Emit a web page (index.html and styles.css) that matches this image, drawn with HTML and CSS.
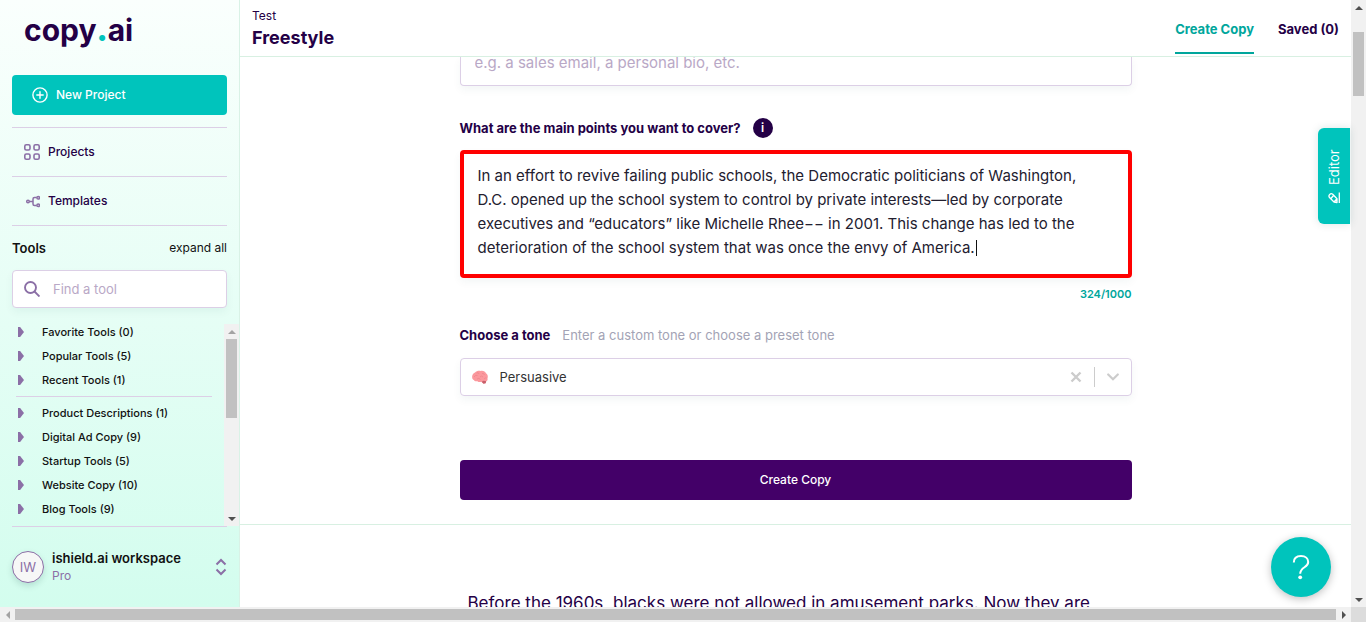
FILE: index.html
```html
<!DOCTYPE html>
<html lang="en">
<head>
<meta charset="utf-8">
<meta name="viewport" content="width=device-width, initial-scale=1">
<title>Freestyle - copy.ai</title>
<link rel="stylesheet" href="styles.css">
</head>
<body>
<div class="window">
  <aside class="sidebar">
    <a class="logo" href="#">copy<span class="logo-dot">.</span>ai</a>
    <button class="new-project" type="button">
      <svg width="16" height="16" viewBox="0 0 16 16" fill="none" stroke="currentColor" stroke-width="1.4" stroke-linecap="round"><circle cx="8" cy="8" r="7.1"/><path d="M8 4.8v6.4M4.8 8h6.4"/></svg>
      New Project
    </button>
    <nav class="nav">
      <a class="nav-link" href="#">
        <svg width="16" height="16" viewBox="0 0 16 16" fill="none" stroke="currentColor" stroke-width="1.6"><rect x=".8" y=".8" width="5.2" height="5.2" rx="1.5"/><rect x="10" y=".8" width="5.2" height="5.2" rx="1.5"/><rect x=".8" y="10" width="5.2" height="5.2" rx="1.5"/><rect x="10" y="10" width="5.2" height="5.2" rx="1.5"/></svg>
        Projects
      </a>
      <a class="nav-link" href="#">
        <svg width="16" height="16" viewBox="0 0 16 16" fill="none" stroke="currentColor" stroke-width="1.5"><circle cx="4" cy="8.500" r="1.300"/><circle cx="14.200" cy="4.800" r="1.300"/><circle cx="14.200" cy="12.200" r="1.300"/><path d="M5.500 8.500H9M12.700 4.500H10.500Q9 4.500 9 6V11Q9 12.500 10.500 12.500H12.700"/></svg>
        Templates
      </a>
    </nav>
    <div class="tools-head">
      <h2 class="tools-title">Tools</h2>
      <button class="expand" type="button">expand all</button>
    </div>
    <label class="search">
      <svg width="16" height="16" viewBox="0 0 16 16" fill="none" stroke="currentColor" stroke-width="1.9"><circle cx="6.500" cy="6.500" r="5.500"/><path d="M10.500 10.500L15.500 15.500"/></svg>
      <input class="search-input" type="text" placeholder="Find a tool" aria-label="Find a tool">
    </label>
    <div class="tools">
      <div class="tools-body">
        <ul class="tool-list">
          <li><button class="tool" type="button">Favorite Tools (0)</button></li>
          <li><button class="tool" type="button">Popular Tools (5)</button></li>
          <li><button class="tool" type="button">Recent Tools (1)</button></li>
        </ul>
        <ul class="tool-list tool-list-more">
          <li><button class="tool" type="button">Product Descriptions (1)</button></li>
          <li><button class="tool" type="button">Digital Ad Copy (9)</button></li>
          <li><button class="tool" type="button">Startup Tools (5)</button></li>
          <li><button class="tool" type="button">Website Copy (10)</button></li>
          <li><button class="tool" type="button">Blog Tools (9)</button></li>
        </ul>
      </div>
      <div class="bar bar-v bar-tools" aria-hidden="true"><i class="arrow up off"></i><div class="track"><div class="thumb thumb-tools"></div></div><i class="arrow down"></i></div>
    </div>
    <button class="workspace" type="button">
      <span class="avatar">IW</span>
      <span class="workspace-text"><b class="workspace-name">ishield.ai workspace</b><span class="plan">Pro</span></span>
      <svg width="12" height="18" viewBox="0 0 12 18" fill="none" stroke="currentColor" stroke-width="2"><path d="M1.500 6.500L6 2L10.500 6.500M1.500 11.500L6 16L10.500 11.500"/></svg>
    </button>
  </aside>

  <main class="main">
    <header class="header">
      <div>
        <div class="crumb">Test</div>
        <h1 class="title">Freestyle</h1>
      </div>
      <nav class="tabs">
        <a class="tab tab-active" href="#">Create Copy</a>
        <a class="tab" href="#">Saved (0)</a>
      </nav>
    </header>
    <div class="scroll">
      <form class="form">
        <input class="field-cut" type="text" placeholder="e.g. a sales email, a personal bio, etc." aria-label="What are you creating?">
        <div class="label-row">
          <label class="label" for="points">What are the main points you want to cover?</label>
          <button class="info" type="button" aria-label="More information">i</button>
        </div>
        <div class="points-wrap">
          <textarea class="points" id="points" rows="4">In an effort to revive failing public schools, the Democratic politicians of Washington, D.C. opened up the school system to control by private interests—led by corporate executives and “educators” like Michelle Rhee−− in 2001. This change has led to the deterioration of the school system that was once the envy of America.</textarea>
          <i class="caret"></i>
        </div>
        <div class="count">324/1000</div>
        <div class="label-row tone-row">
          <label class="label" for="tone">Choose a tone</label>
          <span class="hint">Enter a custom tone or choose a preset tone</span>
        </div>
        <div class="tone">
          <svg width="18" height="16" viewBox="0 0 18 16"><path d="M1.200 9C.7 6.200 2.200 4.300 4 3.600C5.200 1.800 8 1.400 9.800 1.900C12.200 1.400 14.200 2.500 15 4.200C16.700 5.300 17.300 7.500 16.500 9.300C17 11 16 12.300 15 12.400L14.600 14.200L12.500 14.600L10.500 12.800C8.700 13.400 7.200 13 6.400 12.200C4.500 12.600 3.300 11.900 2.900 10.900C2.100 10.700 1.400 10 1.200 9Z" fill="#fb989d"/><path d="M10.500 12.800L12.700 11.800L15.200 12.300L14.600 14.300L12.500 14.700Z" fill="#c7606b"/><path d="M3 8Q4.500 5.500 6.500 6.500M5.500 4Q7.500 3 8 5M9 8Q10.500 6 12 8M11 4.500Q13 4 13.500 6M6 10Q8 8.500 9.500 10.500M13 10Q14.500 8.500 15.500 9" fill="none" stroke="#ec828a" stroke-width=".7"/></svg>
          <select class="tone-select" id="tone"><option>Persuasive</option></select>
          <button class="tone-button" type="button" aria-label="Clear"><svg width="12" height="12" viewBox="0 0 12 12" fill="none" stroke="currentColor" stroke-width="2.400"><path d="M1.500 1.500L10.500 10.500M10.500 1.500L1.500 10.500"/></svg></button>
          <span class="tone-line"></span>
          <button class="tone-button" type="button" aria-label="Open tones"><svg width="12" height="8" viewBox="0 0 12 8" fill="none" stroke="currentColor" stroke-width="2.200" stroke-linecap="round"><path d="M1.200 1.500L6 6.200L10.800 1.500"/></svg></button>
        </div>
        <button class="submit" type="button">Create Copy</button>
      </form>
      <section class="results">
        <p class="result">Before the 1960s, blacks were not allowed in amusement parks. Now they are</p>
      </section>
    </div>
    <button class="editor" type="button">
      <svg width="12" height="12" viewBox="0 0 12 12" fill="none" stroke="currentColor" stroke-width="1.300" stroke-linejoin="round"><path d="M1 11.300H11.500M1.500 9L2 6L6.500 1.500Q8 .3 9.500 1.700T9.800 4.700L5.300 9ZM5.300 2.700L8.700 5.800M2 6L5.300 9"/></svg>
      Editor
    </button>
    <button class="help" type="button" aria-label="Help"><svg width="60" height="60" viewBox="0 0 60 60" fill="none" stroke="#fff" stroke-width="2"><path d="M22.800 25.500C22.800 21.500 25.500 19 30 19C34.500 19 37.200 21.500 37.200 25C37.200 31 29.200 29.500 29.200 36.800"/><circle cx="29.200" cy="40.300" r="1.900" fill="#fff" stroke="none"/></svg></button>
  </main>

  <div class="bar bar-v" aria-hidden="true"><i class="arrow up"></i><div class="track"><div class="thumb thumb-page"></div></div><i class="arrow down"></i></div>
  <div class="bar bar-h" aria-hidden="true"><i class="arrow left off"></i><div class="track"><div class="thumb thumb-wide"></div></div><i class="arrow right"></i></div>
  <div class="corner"></div>
</div>
</body>
</html>
```
FILE: styles.css
```css
* { box-sizing: border-box; }

body {
  margin: 0;
  font-family: Inter, "Liberation Sans", sans-serif;
  font-size: 15px;
  line-height: 24px;
  color: #240046;
}

button, input, textarea, select {
  margin: 0;
  padding: 0;
  border: 0;
  background: none;
  font: inherit;
  color: inherit;
  outline: none;
}

a { color: inherit; text-decoration: none; }
h1, h2, p, ul { margin: 0; padding: 0; }
ul { list-style: none; }
svg { display: block; flex: none; }

.window {
  display: grid;
  grid-template: minmax(0, 1fr) 15px / 240px minmax(0, 1fr) 15px;
  height: 100vh;
  overflow: hidden;
}

/* Sidebar */
.sidebar {
  display: flex;
  flex-direction: column;
  min-height: 0;
  padding: 10px 12px 0;
  border-right: 1px solid #d9f2e6;
  background: linear-gradient(#fafffd, #d3fdee);
}

.logo {
  padding-left: 12px;
  font-size: 30px;
  font-weight: 700;
  line-height: 40px;
}
.logo-dot { color: #00c4bc; font-weight: 900; }

.new-project {
  display: flex;
  align-items: center;
  gap: 8px;
  flex: none;
  height: 40px;
  margin: 25px 0 12px;
  padding-left: 20px;
  border-radius: 4px;
  background: #00c4bc;
  color: #fff;
  font-size: 12px;
  font-weight: 500;
}

.nav-link {
  display: flex;
  align-items: center;
  gap: 8px;
  height: 49px;
  padding-left: 12px;
  border-top: 1px solid #dccfe6;
  font-size: 12px;
  font-weight: 500;
}
.nav-link svg { color: #8b6fa6; }

.tools-head {
  display: flex;
  justify-content: space-between;
  align-items: center;
  height: 45px;
  border-top: 1px solid #dccfe6;
  color: #111;
}
.tools-title { font-size: 13px; font-weight: 600; }
.expand { font-size: 12px; }

.search {
  display: flex;
  align-items: center;
  gap: 13px;
  flex: none;
  height: 38px;
  padding: 0 11px;
  border: 1px solid #dccfe6;
  border-radius: 4px;
  background: #fff;
  box-shadow: 0 4px 8px rgba(0, 80, 80, .05);
  color: #8b6fa6;
}
.search-input { min-width: 0; flex: 1; font-size: 13px; }
::placeholder { color: #b9a8c6; opacity: 1; }

.tools {
  display: flex;
  flex: 1;
  min-height: 0;
  margin: 12px -12px 0 4px;
}
.tools-body { flex: 1; min-height: 0; overflow: hidden; }
.bar-tools { margin-top: 4px; }
.tool-list-more {
  margin: 4px 12px 0 0;
  padding-top: 4px;
  border-top: 1px solid #dccfe6;
}
.tool {
  display: flex;
  align-items: center;
  gap: 18px;
  padding-left: 2px;
  color: #111;
  font-size: 11px;
  font-weight: 500;
}
.tool::before {
  content: "";
  width: 6px;
  height: 10px;
  background: #8b6fa6;
  clip-path: polygon(0 0, 35% 0, 100% 50%, 35% 100%, 0 100%);
}

.workspace {
  display: flex;
  align-items: center;
  flex: none;
  height: 81px;
  border-top: 1px solid #dccfe6;
  text-align: left;
  color: #8b6fa6;
}
.avatar {
  width: 32px;
  height: 32px;
  border: 1px solid #8b6fa6;
  border-radius: 50%;
  background: #f7f7f7;
  box-shadow: 0 3px 6px rgba(0, 60, 60, .15);
  line-height: 30px;
  text-align: center;
  font-size: 13px;
}
.workspace-text { flex: 1; padding-left: 8px; }
.workspace-name { display: block; line-height: 18px; font-size: 13px; font-weight: 600; color: #111; }
.plan { display: block; line-height: 18px; font-size: 12px; }

/* Main column */
.main {
  position: relative;
  display: flex;
  flex-direction: column;
  min-height: 0;
  background: #fff;
}
.header {
  display: flex;
  justify-content: space-between;
  flex: none;
  height: 57px;
  padding: 6px 12px 0;
  border-bottom: 1px solid #d8f0e2;
}
.crumb { line-height: 20px; font-size: 12px; }
.title { line-height: 24px; font-size: 18px; font-weight: 700; }
.tabs { display: flex; gap: 24px; }
.tab { height: 48px; line-height: 46px; font-size: 13px; font-weight: 700; }
.tab-active { border-bottom: 2px solid #00a69c; color: #00a69c; }

.scroll { flex: 1; min-height: 0; overflow: hidden; }
.form {
  display: flex;
  flex-direction: column;
  max-width: 672px;
  margin: 0 auto;
  padding-bottom: 24px;
}
.field-cut {
  height: 29px;
  padding: 0 14px 18px;
  border: 1px solid #dccfe6;
  border-top: 0;
  border-radius: 0 0 4px 4px;
  box-shadow: 0 4px 8px rgba(0, 80, 80, .05);
}
.label-row { display: flex; align-items: center; gap: 12px; margin: 30px 0 10px; }
.label { font-size: 13px; font-weight: 700; }
.info {
  width: 20px;
  height: 20px;
  border-radius: 50%;
  background: #240046;
  color: #fff;
  line-height: 20px;
  font-size: 12px;
  font-weight: 600;
}
.points-wrap { position: relative; display: flex; }
.points {
  flex: 1;
  height: 128px;
  padding: 10px 24px 14px 14px;
  border: 4px solid #f00;
  border-radius: 4px;
  box-shadow: 0 4px 8px rgba(0, 80, 80, .05);
  resize: none;
  overflow: hidden;
  color: #23202f;
}
.caret {
  position: absolute;
  left: 516px;
  top: 90px;
  width: 1px;
  height: 16px;
  background: #111;
}
.count { margin-top: 4px; text-align: right; font-size: 11px; font-weight: 600; color: #00a69c; }
.tone-row { margin: 17px 0 11px; }
.hint { font-size: 13px; color: #a3a3b5; }
.tone {
  display: flex;
  align-items: center;
  height: 38px;
  padding-left: 10px;
  border: 1px solid #dccfe6;
  border-radius: 4px;
  box-shadow: 0 4px 8px rgba(0, 80, 80, .05);
}
.tone-select { appearance: none; flex: 1; padding-left: 11px; font-size: 13px; color: #333; }
.tone-button { display: grid; place-items: center; width: 36px; height: 36px; color: #ccc; }
.tone-line { width: 1px; height: 20px; background: #ccc; }
.submit {
  height: 40px;
  margin-top: 64px;
  border-radius: 4px;
  background: #430068;
  color: #fff;
  font-size: 12px;
  font-weight: 500;
}
.results { border-top: 1px solid #d8f0e2; padding-top: 66px; }
.result { max-width: 656px; margin: 0 auto; white-space: nowrap; font-size: 17px; }

.editor {
  position: absolute;
  top: 128px;
  right: 1px;
  display: flex;
  align-items: center;
  gap: 7px;
  width: 32px;
  height: 96px;
  padding: 20px 0;
  border-radius: 0 6px 6px 0;
  background: #00c4bc;
  color: #fff;
  writing-mode: vertical-rl;
  transform: rotate(180deg);
  font-size: 13px;
  box-shadow: 0 0 8px rgba(0, 80, 80, .15);
}
.editor svg { transform: rotate(90deg); }
.help {
  position: absolute;
  right: 20px;
  bottom: 10px;
  border-radius: 50%;
  background: #00c4bc;
  box-shadow: 0 2px 8px rgba(0, 0, 0, .25);
}

/* Scroll bars */
.bar { display: flex; background: #f1f1f1; }
.bar-v { flex-direction: column; width: 15px; }
.bar-h { grid-column: 1 / 3; padding: 2px 0; }
.track { flex: 1; min-height: 0; }
.thumb { background: #c1c1c1; }
.bar-v .thumb { width: 11px; margin: 0 auto; }
.thumb-page { height: 11%; position: relative; top: 3%; }
.thumb-tools { height: 46%; }
.thumb-wide { height: 100%; }
.arrow { display: grid; place-items: center; flex: none; width: 15px; height: 15px; }
.bar-h .arrow { height: 11px; }
.arrow::before { content: ""; border: 4px solid transparent; color: #505050; }
.off::before { color: #a3a3a3; }
.up::before { border-top: 0; border-bottom-color: currentColor; }
.down::before { border-bottom: 0; border-top-color: currentColor; }
.left::before { border-left: 0; border-right-color: currentColor; }
.right::before { border-right: 0; border-left-color: currentColor; }
.corner { background: #dcdcdc; }
```
